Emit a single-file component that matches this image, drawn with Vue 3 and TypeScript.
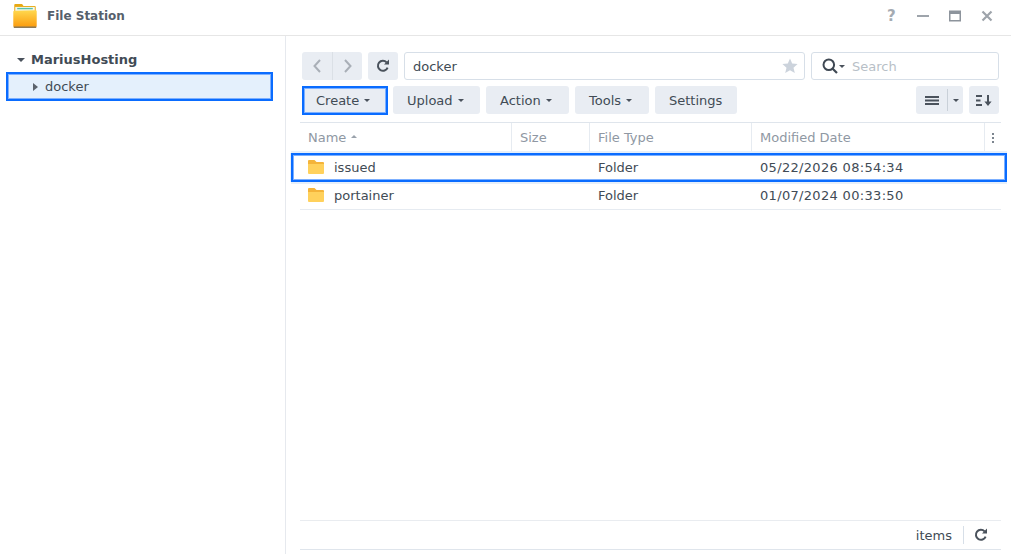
<script setup lang="ts">
interface Row { name: string; type: string; date: string; selected: boolean }
interface Action { label: string; cls: string }
const rows: Row[] = [
  { name: 'issued', type: 'Folder', date: '05/22/2026 08:54:34', selected: true },
  { name: 'portainer', type: 'Folder', date: '01/07/2024 00:33:50', selected: false },
]
const actions: Action[] = [
  { label: 'Upload', cls: 'w-upload' },
  { label: 'Action', cls: 'w-action' },
  { label: 'Tools', cls: 'w-tools' },
]
</script>

<template>
  <div class="app">
    <header class="titlebar">
      <svg class="logo" width="24" height="24" viewBox="1 1 24 24.6">
        <defs>
          <linearGradient id="fg" x1="0" y1="0" x2="0" y2="1">
            <stop offset="0" stop-color="#ffd84f" />
            <stop offset="1" stop-color="#fb9a0c" />
          </linearGradient>
        </defs>
        <path d="M2 2 Q2 1 3 1 H10 L11.5 3 H23 Q24 3 24 4 V10 H2 Z" fill="#e8a913" />
        <rect x="3" y="4" width="20" height="6" fill="#f4f7ec" />
        <rect x="5" y="5" width="16" height="1.4" fill="#58c2a8" />
        <path d="M1 9 Q1 8 2 8 L24 7.5 Q25 7.5 25 8.5 V23.5 Q25 25 23.5 25 H2.5 Q1 25 1 23.5 Z" fill="url(#fg)" />
        <rect x="1.5" y="24" width="23" height="1.6" fill="#8f7a55" />
      </svg>
      <span class="app-title">File Station</span>
      <div class="win-controls">
        <span class="help">?</span>
        <svg width="12" height="12" viewBox="0 0 12 12"><rect x="0" y="5" width="12" height="2" fill="#9ea4ab" /></svg>
        <svg width="12" height="12" viewBox="0 0 12 12"><path d="M0 0.5H12V11.5H0Z M1.5 4H10.5V10H1.5Z" fill="#8d949c" fill-rule="evenodd" /></svg>
        <svg width="12" height="12" viewBox="0 0 12 12"><path d="M1.5 1.5L10.5 10.5M10.5 1.5L1.5 10.5" stroke="#9ea4ab" stroke-width="2.2" /></svg>
      </div>
    </header>

    <div class="body">
      <aside class="sidebar">
        <div class="tree-root">
          <span class="caret-down dark"></span>
          <span>MariusHosting</span>
        </div>
        <div class="tree-item">
          <span class="caret-right"></span>
          <span>docker</span>
        </div>
      </aside>

      <main class="content">
        <div class="toolbar top">
          <div class="btn-group">
            <button class="btn nav">
              <svg width="10" height="16" viewBox="0 0 10 16"><path d="M8 2L2.5 8L8 14" fill="none" stroke="#a9afb7" stroke-width="2" /></svg>
            </button>
            <button class="btn nav nav-next">
              <svg width="10" height="16" viewBox="0 0 10 16"><path d="M2 2L7.5 8L2 14" fill="none" stroke="#a9afb7" stroke-width="2" /></svg>
            </button>
          </div>
          <button class="btn square">
            <svg width="14" height="14" viewBox="0 0 14 14"><path d="M11.6 8.6A5 5 0 1 1 10.6 3.4" fill="none" stroke="#4a525c" stroke-width="2" /><path d="M8 5.4H13V0.6Z" fill="#4a525c" /></svg>
          </button>
          <div class="path-input">
            <span class="path-text">docker</span>
            <svg width="16" height="16" viewBox="0 0 16 16"><path d="M8 .6L10.2 5.6L15.6 6.1L11.5 9.7L12.8 15L8 12.2L3.2 15L4.5 9.7L.4 6.1L5.8 5.6Z" fill="#ccd3dc" /></svg>
          </div>
          <div class="search">
            <svg width="16" height="16" viewBox="0 0 16 16"><circle cx="6.8" cy="6.8" r="5.3" fill="none" stroke="#3f4853" stroke-width="2" /><path d="M10.5 10.5L15 15" stroke="#3f4853" stroke-width="2.2" /></svg>
            <span class="caret-down dark small search-caret"></span>
            <span class="search-text">Search</span>
          </div>
        </div>

        <div class="toolbar second">
          <button class="btn text-btn create">Create<span class="caret-down dark small"></span></button>
          <button v-for="a in actions" :key="a.label" class="btn text-btn" :class="a.cls">{{ a.label }}<span class="caret-down dark small"></span></button>
          <button class="btn text-btn w-settings">Settings</button>
          <div class="spacer"></div>
          <div class="btn view-btn">
            <span class="view-main">
              <svg width="14" height="9" viewBox="0 0 14 9"><path d="M0 0H14V2H0ZM0 3.5H14V5.5H0ZM0 7H14V9H0Z" fill="#4a525c" /></svg>
            </span>
            <span class="view-drop"><span class="caret-down dark small"></span></span>
          </div>
          <button class="btn square">
            <svg width="16" height="11" viewBox="0 0 16 11"><path d="M0 0H6V2H0ZM0 4.5H4.5V6.5H0ZM0 9H6V11H0Z" fill="#4a525c" /><path d="M11 0H13V6.5H15.6L12 11L8.4 6.5H11Z" fill="#4a525c" /></svg>
          </button>
        </div>

        <div class="table">
          <div class="grid head">
            <div class="cell hcell">Name<span class="caret-up"></span></div>
            <div class="cell hcell">Size</div>
            <div class="cell hcell">File Type</div>
            <div class="cell hcell">Modified Date</div>
            <div class="cell more"><i></i><i></i><i></i></div>
          </div>
          <div v-for="r in rows" :key="r.name" class="grid row" :class="{ selected: r.selected }">
            <div class="cell name">
              <svg width="16" height="14" viewBox="0 0 16 14"><path d="M0 1Q0 0 1 0H6.5L8.5 2H15Q16 2 16 3V4H0Z" fill="#f4b43a" /><path d="M0 4H16V13Q16 14 15 14H1Q0 14 0 13Z" fill="#ffd15c" /></svg>
              <span>{{ r.name }}</span>
            </div>
            <div class="cell"></div>
            <div class="cell">{{ r.type }}</div>
            <div class="cell date">{{ r.date }}</div>
            <div class="cell"></div>
          </div>
        </div>

        <footer class="statusbar">
          <span class="items">items</span>
          <span class="status-refresh">
            <svg width="14" height="14" viewBox="0 0 14 14"><path d="M11.6 8.6A5 5 0 1 1 10.6 3.4" fill="none" stroke="#4a525c" stroke-width="2" /><path d="M8 5.4H13V0.6Z" fill="#4a525c" /></svg>
          </span>
        </footer>
      </main>
    </div>
  </div>
</template>

<style scoped>
.app {
  width: 1011px;
  height: 554px;
  display: flex;
  flex-direction: column;
  background: #fff;
  font-family: "DejaVu Sans", sans-serif;
  font-size: 13px;
  color: #414b55;
  overflow: hidden;
}
.titlebar {
  height: 36px;
  box-sizing: border-box;
  flex: none;
  display: flex;
  align-items: center;
  padding: 0 18px 3px 13px;
  border-bottom: 1px solid #e6e6e6;
}
.logo { flex: none; margin-right: 10px; }
.app-title {
  font-size: 12px;
  font-weight: 700;
  color: #56606c;
}
.win-controls {
  margin-left: auto;
  display: flex;
  align-items: center;
  gap: 20px;
}
.help {
  font-size: 15px;
  font-weight: 700;
  color: #a5abb2;
  width: 10px;
}
.body { flex: 1; display: flex; min-height: 0; }
.sidebar {
  width: 286px;
  flex: none;
  box-sizing: border-box;
  border-right: 1px solid #e6e9ee;
  padding: 11px 12px 0 6px;
}
.tree-root {
  height: 25px;
  display: flex;
  align-items: center;
  font-weight: 700;
  color: #414b55;
  padding-left: 11px;
  gap: 6px;
}
.tree-item {
  height: 29px;
  box-sizing: border-box;
  width: 267px;
  border: 2px solid #0a6cff;
  box-shadow: inset 0 0 0 1px #7db0ff;
  background: #e4f0fc;
  display: flex;
  align-items: center;
  padding-left: 25px;
  gap: 7px;
}
.caret-down {
  display: inline-block;
  width: 0;
  height: 0;
  border-left: 4px solid transparent;
  border-right: 4px solid transparent;
  border-top: 4px solid #56606c;
}
.caret-down.small {
  border-left-width: 3px;
  border-right-width: 3px;
  border-top-width: 3px;
}
.caret-down.dark { border-top-color: #4a525c; }
.caret-right {
  display: inline-block;
  width: 0;
  height: 0;
  border-top: 4px solid transparent;
  border-bottom: 4px solid transparent;
  border-left: 5px solid #5b636d;
}
.caret-up {
  display: inline-block;
  width: 0;
  height: 0;
  margin-left: 5px;
  margin-bottom: 3px;
  border-left: 3px solid transparent;
  border-right: 3px solid transparent;
  border-bottom: 3px solid #9aa2ab;
}
.content {
  flex: 1;
  min-width: 0;
  display: flex;
  flex-direction: column;
  padding: 16px 10px 4px 14px;
  box-sizing: border-box;
}
.toolbar { display: flex; gap: 6px; height: 28px; flex: none; padding: 0 2px; }
.toolbar.second { margin-top: 6px; }
.spacer { flex: 1; }
.btn {
  border: 0;
  padding: 0;
  margin: 0;
  background: #e9edf3;
  border-radius: 3px;
  font: inherit;
  color: #414b55;
  display: inline-flex;
  align-items: center;
  justify-content: center;
  height: 28px;
  box-sizing: border-box;
}
.btn-group { display: flex; }
.nav { width: 30px; border-radius: 3px 0 0 3px; }
.nav-next { border-left: 1px solid #dbe0e6; border-radius: 0 3px 3px 0; }
.square { width: 30px; flex: none; }
.path-input {
  width: 401px;
  box-sizing: border-box;
  border: 1px solid #d7dfe8;
  border-radius: 3px;
  display: flex;
  align-items: center;
  justify-content: space-between;
  padding: 0 6px 0 8px;
  color: #414b55;
}
.search {
  width: 188px;
  box-sizing: border-box;
  border: 1px solid #d7dfe8;
  border-radius: 3px;
  display: flex;
  align-items: center;
  padding-left: 10px;
}
.search-caret { margin-left: 1px; }
.search-text { color: #b8bfc7; margin-left: 7px; }
.text-btn {
  padding: 0 14px;
  gap: 5px;
}
.w-upload { width: 87px; justify-content: flex-start; }
.w-action { width: 83px; justify-content: flex-start; }
.w-tools { width: 74px; justify-content: flex-start; }
.w-settings { width: 82px; justify-content: flex-start; }
.create {
  width: 86px;
  height: 29px;
  border: 2px solid #0a6cff;
  box-shadow: inset 0 0 0 1px #7db0ff;
  border-radius: 0;
  padding: 0 0 1px 12px;
  justify-content: flex-start;
  margin-right: -1px;
}
.view-btn { width: 47px; flex: none; }
.view-main {
  width: 31px;
  height: 22px;
  display: flex;
  align-items: center;
  justify-content: center;
  border-right: 1px solid #c9d0d8;
}
.view-drop {
  flex: 1;
  display: flex;
  justify-content: center;
}
.table {
  margin-top: 8px;
  flex: 1;
  border-top: 1px solid #dfe5ec;
}
.grid {
  display: grid;
  grid-template-columns: 212px 78px 162px 233px 16px;
  width: 701px;
}
.head { height: 30px; }
.head .cell { padding-bottom: 1px; }
.row {
  height: 29px;
  box-sizing: border-box;
  border-bottom: 1px solid #e6ebf1;
  position: relative;
}
.row.selected {
  height: 28px;
  border-bottom: 0;
}
.cell {
  display: flex;
  align-items: center;
  padding-left: 8px;
  box-sizing: border-box;
  white-space: nowrap;
}
.hcell {
  color: #8f98a3;
  border-right: 1px solid #e6ebf1;
}
.more {
  padding: 0;
  flex-direction: column;
  justify-content: center;
  gap: 2px;
}
.more i {
  width: 2px;
  height: 2px;
  background: #7c858f;
}
.date { letter-spacing: 0.32px; }
.name { gap: 10px; padding-left: 8px; }
.name svg { margin-bottom: 1px; }
.selected::after {
  content: "";
  position: absolute;
  left: -9px;
  right: -6px;
  top: 0;
  bottom: -1px;
  border: 2px solid #0a6cff;
  box-shadow: inset 0 0 0 1px #7db0ff, 0 -2px 0 #e6effa, 0 2px 0 #e6effa, -1px 0 0 #e6effa;
  pointer-events: none;
}
.statusbar {
  height: 30px;
  flex: none;
  box-sizing: border-box;
  border-top: 1px solid #e9ecf0;
  border-bottom: 1px solid #dfe5ec;
  display: flex;
  align-items: center;
  justify-content: flex-end;
  width: 701px;
  padding-right: 13px;
}
.items { color: #414b55; }
.status-refresh {
  margin-left: 11px;
  border-left: 1px solid #d7dfe8;
  height: 18px;
  display: flex;
  align-items: center;
  padding-left: 10px;
}
</style>
